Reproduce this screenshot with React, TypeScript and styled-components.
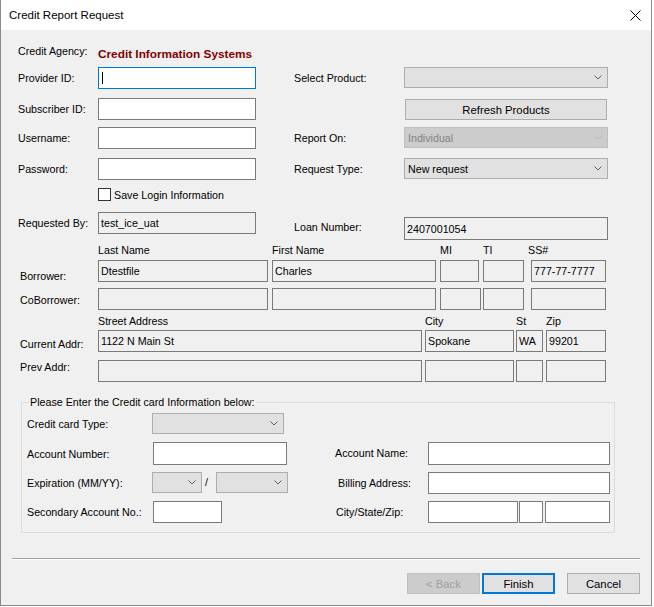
import React from "react";
import styled, { createGlobalStyle, css } from "styled-components";

const Global = createGlobalStyle`
  html, body { margin: 0; padding: 0; background: #ffffff; }
  body {
    font-family: "Liberation Sans", Arial, sans-serif;
    font-size: 10.7px;
    color: #000000;
  }
  * { box-sizing: border-box; }
`;

type Place = { $col?: string; $row?: string; $mt?: number; $ml?: number };

const place = css<Place>`
  ${(p) => (p.$col ? `grid-column: ${p.$col};` : "")}
  ${(p) => (p.$row ? `grid-row: ${p.$row};` : "")}
  ${(p) => (p.$mt !== undefined ? `margin-top: ${p.$mt}px;` : "")}
  ${(p) => (p.$ml !== undefined ? `margin-left: ${p.$ml}px;` : "")}
`;

const Window = styled.div`
  width: 652px;
  height: 606px;
  border: 1px solid #8a8a8a;
  border-top: none;
  display: flex;
  flex-direction: column;
  background: #f0f0f0;
`;

const TitleBar = styled.div`
  height: 30px;
  flex: 0 0 30px;
  background: #ffffff;
  display: flex;
  align-items: center;
  justify-content: space-between;
  padding: 0 10px 0 8px;
  font-size: 11.5px;
  color: #000;
`;

const Body = styled.div`
  flex: 1;
  display: flex;
  flex-direction: column;
`;

const TopGrid = styled.div`
  display: grid;
  grid-template-columns: 80px 158px 38px 110px 204px;
  grid-template-rows: 27px 31px 29px 31px 28px 26px 29px;
  margin: 10px 0 0 17px;
`;

const Label = styled.div<Place>`
  ${place}
  height: 22px;
  display: flex;
  align-items: center;
  white-space: nowrap;
  align-self: start;
`;

const Agency = styled.div<Place>`
  ${place}
  height: 22px;
  display: flex;
  align-items: center;
  white-space: nowrap;
  align-self: start;
  font-weight: bold;
  font-size: 11.8px;
  color: #800000;
`;

type BoxProps = Place & { $w?: number; $h?: number; $bg?: string; $focus?: boolean };

const TextBox = styled.div<BoxProps>`
  ${place}
  align-self: start;
  flex: 0 0 auto;
  width: ${(p) => (p.$w ? `${p.$w}px` : "100%")};
  height: ${(p) => p.$h ?? 22}px;
  border: 1px solid ${(p) => (p.$focus ? "#0078d7" : "#7a7a7a")};
  background: ${(p) => p.$bg ?? "#ffffff"};
  padding-left: 2px;
  display: flex;
  align-items: center;
  white-space: nowrap;
  overflow: hidden;
`;

const Caret = styled.span`
  display: block;
  width: 1px;
  height: 12px;
  background: #000;
  margin-left: 1px;
`;

type ComboProps = Place & { $w?: number; $disabled?: boolean };

const ComboBox = styled.div<ComboProps>`
  ${place}
  align-self: start;
  flex: 0 0 auto;
  width: ${(p) => (p.$w ? `${p.$w}px` : "100%")};
  height: 21px;
  border: 1px solid ${(p) => (p.$disabled ? "#bfbfbf" : "#adadad")};
  background: ${(p) => (p.$disabled ? "#cccccc" : "#e1e1e1")};
  color: ${(p) => (p.$disabled ? "#838383" : "#000")};
  padding: 0 5px 0 3px;
  display: flex;
  align-items: center;
  justify-content: space-between;
  white-space: nowrap;
`;

const Button = styled.div<Place & { $w?: number; $disabled?: boolean; $default?: boolean }>`
  ${place}
  align-self: start;
  width: ${(p) => (p.$w ? `${p.$w}px` : "73px")};
  height: 21px;
  display: flex;
  align-items: center;
  justify-content: center;
  background: ${(p) => (p.$disabled ? "#cccccc" : "#e1e1e1")};
  color: ${(p) => (p.$disabled ? "#a0a0a0" : "#000")};
  border: ${(p) =>
    p.$default ? "2px solid #0078d7" : `1px solid ${p.$disabled ? "#bfbfbf" : "#adadad"}`};
  font-size: 11.3px;
`;

const CheckRow = styled.div<Place>`
  ${place}
  align-self: start;
  display: flex;
  align-items: center;
  white-space: nowrap;
`;

const CheckBox = styled.span`
  display: block;
  width: 13px;
  height: 13px;
  border: 1px solid #333333;
  background: #ffffff;
  margin-right: 3px;
`;

const Section = styled.div`
  display: flex;
  flex-direction: column;
  padding-left: 19px;
`;

const HeaderRow = styled.div<{ $mt: number }>`
  display: flex;
  height: 16px;
  line-height: 16px;
  padding-left: 78px;
  margin-top: ${(p) => p.$mt}px;
  white-space: nowrap;
`;

const HeaderCell = styled.span<{ $w?: number }>`
  display: block;
  width: ${(p) => (p.$w ? `${p.$w}px` : "auto")};
`;

const FieldRow = styled.div<{ $mt: number }>`
  display: flex;
  align-items: flex-start;
  height: 22px;
  margin-top: ${(p) => p.$mt}px;
`;

const RowLabel = styled.div<{ $mt: number }>`
  width: 78px;
  flex: 0 0 78px;
  height: 16px;
  line-height: 16px;
  margin-top: ${(p) => p.$mt}px;
  white-space: nowrap;
`;

const Group = styled.fieldset`
  margin: 13px 0 0 20px;
  width: 594px;
  min-width: 0;
  border: 1px solid #dcdcdc;
  padding: 4px 0 9px 5px;
`;

const Legend = styled.legend`
  padding: 0 1px;
  margin-left: 2px;
  height: 14px;
  line-height: 14px;
  font-size: 10.7px;
`;

const CardGrid = styled.div`
  display: grid;
  grid-template-columns: 125px 136px 47px 93px 182px;
  grid-template-rows: 29px 30px 29px 22px;
`;

const ExpiryCell = styled.div<Place>`
  ${place}
  display: flex;
  align-items: flex-start;
`;

const Slash = styled.span`
  display: block;
  height: 21px;
  line-height: 21px;
  margin-left: 3px;
  margin-right: auto;
`;

const CityCell = styled.div<Place>`
  ${place}
  display: flex;
  align-items: flex-start;
`;

const Separator = styled.div`
  margin: 25px 0 0 11px;
  width: 628px;
  height: 2px;
  border-top: 1px solid #a0a0a0;
  border-bottom: 1px solid #ffffff;
`;

const ButtonRow = styled.div`
  display: flex;
  justify-content: flex-end;
  margin-top: 13px;
  padding-right: 11px;
`;

const Chevron = ({ color = "#606060" }: { color?: string }) => (
  <svg width="8" height="5" viewBox="0 0 8 5" style={{ display: "block" }}>
    <polyline points="0.5,0.5 4,4 7.5,0.5" fill="none" stroke={color} strokeWidth="1" />
  </svg>
);

const CloseIcon = () => (
  <svg width="11" height="11" viewBox="0 0 11 11" style={{ display: "block" }}>
    <path d="M0.5 0.5 L10.5 10.5 M10.5 0.5 L0.5 10.5" stroke="#000" strokeWidth="1" fill="none" />
  </svg>
);

const Combo = ({
  text = "",
  disabled,
  ...rest
}: { text?: string; disabled?: boolean } & ComboProps) => (
  <ComboBox $disabled={disabled} {...rest}>
    <span>{text}</span>
    <Chevron color={disabled ? "#b8b8b8" : "#606060"} />
  </ComboBox>
);

const GRAY = "#f0f0f0";

export default function App() {
  return (
    <>
      <Global />
      <Window>
        <TitleBar>
          <span>Credit Report Request</span>
          <CloseIcon />
        </TitleBar>
        <Body>
          <TopGrid>
            <Label $col="1" $row="1">Credit Agency:</Label>
            <Agency $col="2 / span 3" $row="1" $mt={3}>Credit Information Systems</Agency>

            <Label $col="1" $row="2">Provider ID:</Label>
            <TextBox $col="2" $row="2" $focus>
              <Caret />
            </TextBox>
            <Label $col="4" $row="2">Select Product:</Label>
            <Combo $col="5" $row="2" />

            <Label $col="1" $row="3">Subscriber ID:</Label>
            <TextBox $col="2" $row="3" />
            <Button $col="5" $row="3" $mt={1} $ml={1} $w={202}>Refresh Products</Button>

            <Label $col="1" $row="4">Username:</Label>
            <TextBox $col="2" $row="4" />
            <Label $col="4" $row="4">Report On:</Label>
            <Combo $col="5" $row="4" text="Individual" disabled />

            <Label $col="1" $row="5">Password:</Label>
            <TextBox $col="2" $row="5" />
            <Label $col="4" $row="5">Request Type:</Label>
            <Combo $col="5" $row="5" text="New request" />

            <CheckRow $col="2 / span 3" $row="6" $mt={2}>
              <CheckBox />
              Save Login Information
            </CheckRow>

            <Label $col="1" $row="7">Requested By:</Label>
            <TextBox $col="2" $row="7" $bg={GRAY}>test_ice_uat</TextBox>
            <Label $col="4" $row="7" $mt={4}>Loan Number:</Label>
            <TextBox $col="5" $row="7" $mt={5} $h={23} $bg={GRAY}>2407001054</TextBox>
          </TopGrid>

          <Section>
            <HeaderRow $mt={1}>
              <HeaderCell $w={174}>Last Name</HeaderCell>
              <HeaderCell $w={168}>First Name</HeaderCell>
              <HeaderCell $w={43}>MI</HeaderCell>
              <HeaderCell $w={45}>TI</HeaderCell>
              <HeaderCell>SS#</HeaderCell>
            </HeaderRow>
            <FieldRow $mt={2}>
              <RowLabel $mt={8}>Borrower:</RowLabel>
              <TextBox $w={170} $bg={GRAY}>Dtestfile</TextBox>
              <TextBox $w={164} $ml={4} $bg={GRAY}>Charles</TextBox>
              <TextBox $w={39} $ml={4} $bg={GRAY} />
              <TextBox $w={41} $ml={4} $bg={GRAY} />
              <TextBox $w={75} $ml={7} $bg={GRAY}>777-77-7777</TextBox>
            </FieldRow>
            <FieldRow $mt={6}>
              <RowLabel $mt={4}>CoBorrower:</RowLabel>
              <TextBox $w={170} $bg={GRAY} />
              <TextBox $w={164} $ml={4} $bg={GRAY} />
              <TextBox $w={41} $ml={4} $bg={GRAY} />
              <TextBox $w={41} $ml={2} $bg={GRAY} />
              <TextBox $w={75} $ml={7} $bg={GRAY} />
            </FieldRow>
            <HeaderRow $mt={3}>
              <HeaderCell $w={327}>Street Address</HeaderCell>
              <HeaderCell $w={91}>City</HeaderCell>
              <HeaderCell $w={30}>St</HeaderCell>
              <HeaderCell>Zip</HeaderCell>
            </HeaderRow>
            <FieldRow $mt={1}>
              <RowLabel $mt={6}>Current Addr:</RowLabel>
              <TextBox $w={324} $bg={GRAY}>1122 N Main St</TextBox>
              <TextBox $w={89} $ml={3} $bg={GRAY}>Spokane</TextBox>
              <TextBox $w={27} $ml={2} $bg={GRAY}>WA</TextBox>
              <TextBox $w={60} $ml={3} $bg={GRAY}>99201</TextBox>
            </FieldRow>
            <FieldRow $mt={8}>
              <RowLabel $mt={-1}>Prev Addr:</RowLabel>
              <TextBox $w={324} $bg={GRAY} />
              <TextBox $w={89} $ml={3} $bg={GRAY} />
              <TextBox $w={27} $ml={2} $bg={GRAY} />
              <TextBox $w={60} $ml={3} $bg={GRAY} />
            </FieldRow>
          </Section>

          <Group>
            <Legend>Please Enter the Credit card Information below:</Legend>
            <CardGrid>
              <Label $col="1" $row="1">Credit card Type:</Label>
              <Combo $col="2" $row="1" $w={132} />

              <Label $col="1" $row="2" $mt={1}>Account Number:</Label>
              <TextBox $col="2" $row="2" $w={134} $ml={1} $h={23} />
              <Label $col="4" $row="2">Account Name:</Label>
              <TextBox $col="5" $row="2" $h={23} />

              <Label $col="1" $row="3">Expiration (MM/YY):</Label>
              <ExpiryCell $col="2" $row="3">
                <Combo $w={50} />
                <Slash>/</Slash>
                <Combo $w={72} />
              </ExpiryCell>
              <Label $col="4" $row="3" $ml={3}>Billing Address:</Label>
              <TextBox $col="5" $row="3" />

              <Label $col="1" $row="4">Secondary Account No.:</Label>
              <TextBox $col="2" $row="4" $w={69} $ml={1} />
              <Label $col="4" $row="4" $ml={1}>City/State/Zip:</Label>
              <CityCell $col="5" $row="4">
                <TextBox $w={90} />
                <TextBox $w={24} $ml={1} />
                <TextBox $w={65} $ml={2} />
              </CityCell>
            </CardGrid>
          </Group>

          <Separator />

          <ButtonRow>
            <Button $disabled>&lt; Back</Button>
            <Button $default $ml={2}>Finish</Button>
            <Button $ml={12}>Cancel</Button>
          </ButtonRow>
        </Body>
      </Window>
    </>
  );
}
